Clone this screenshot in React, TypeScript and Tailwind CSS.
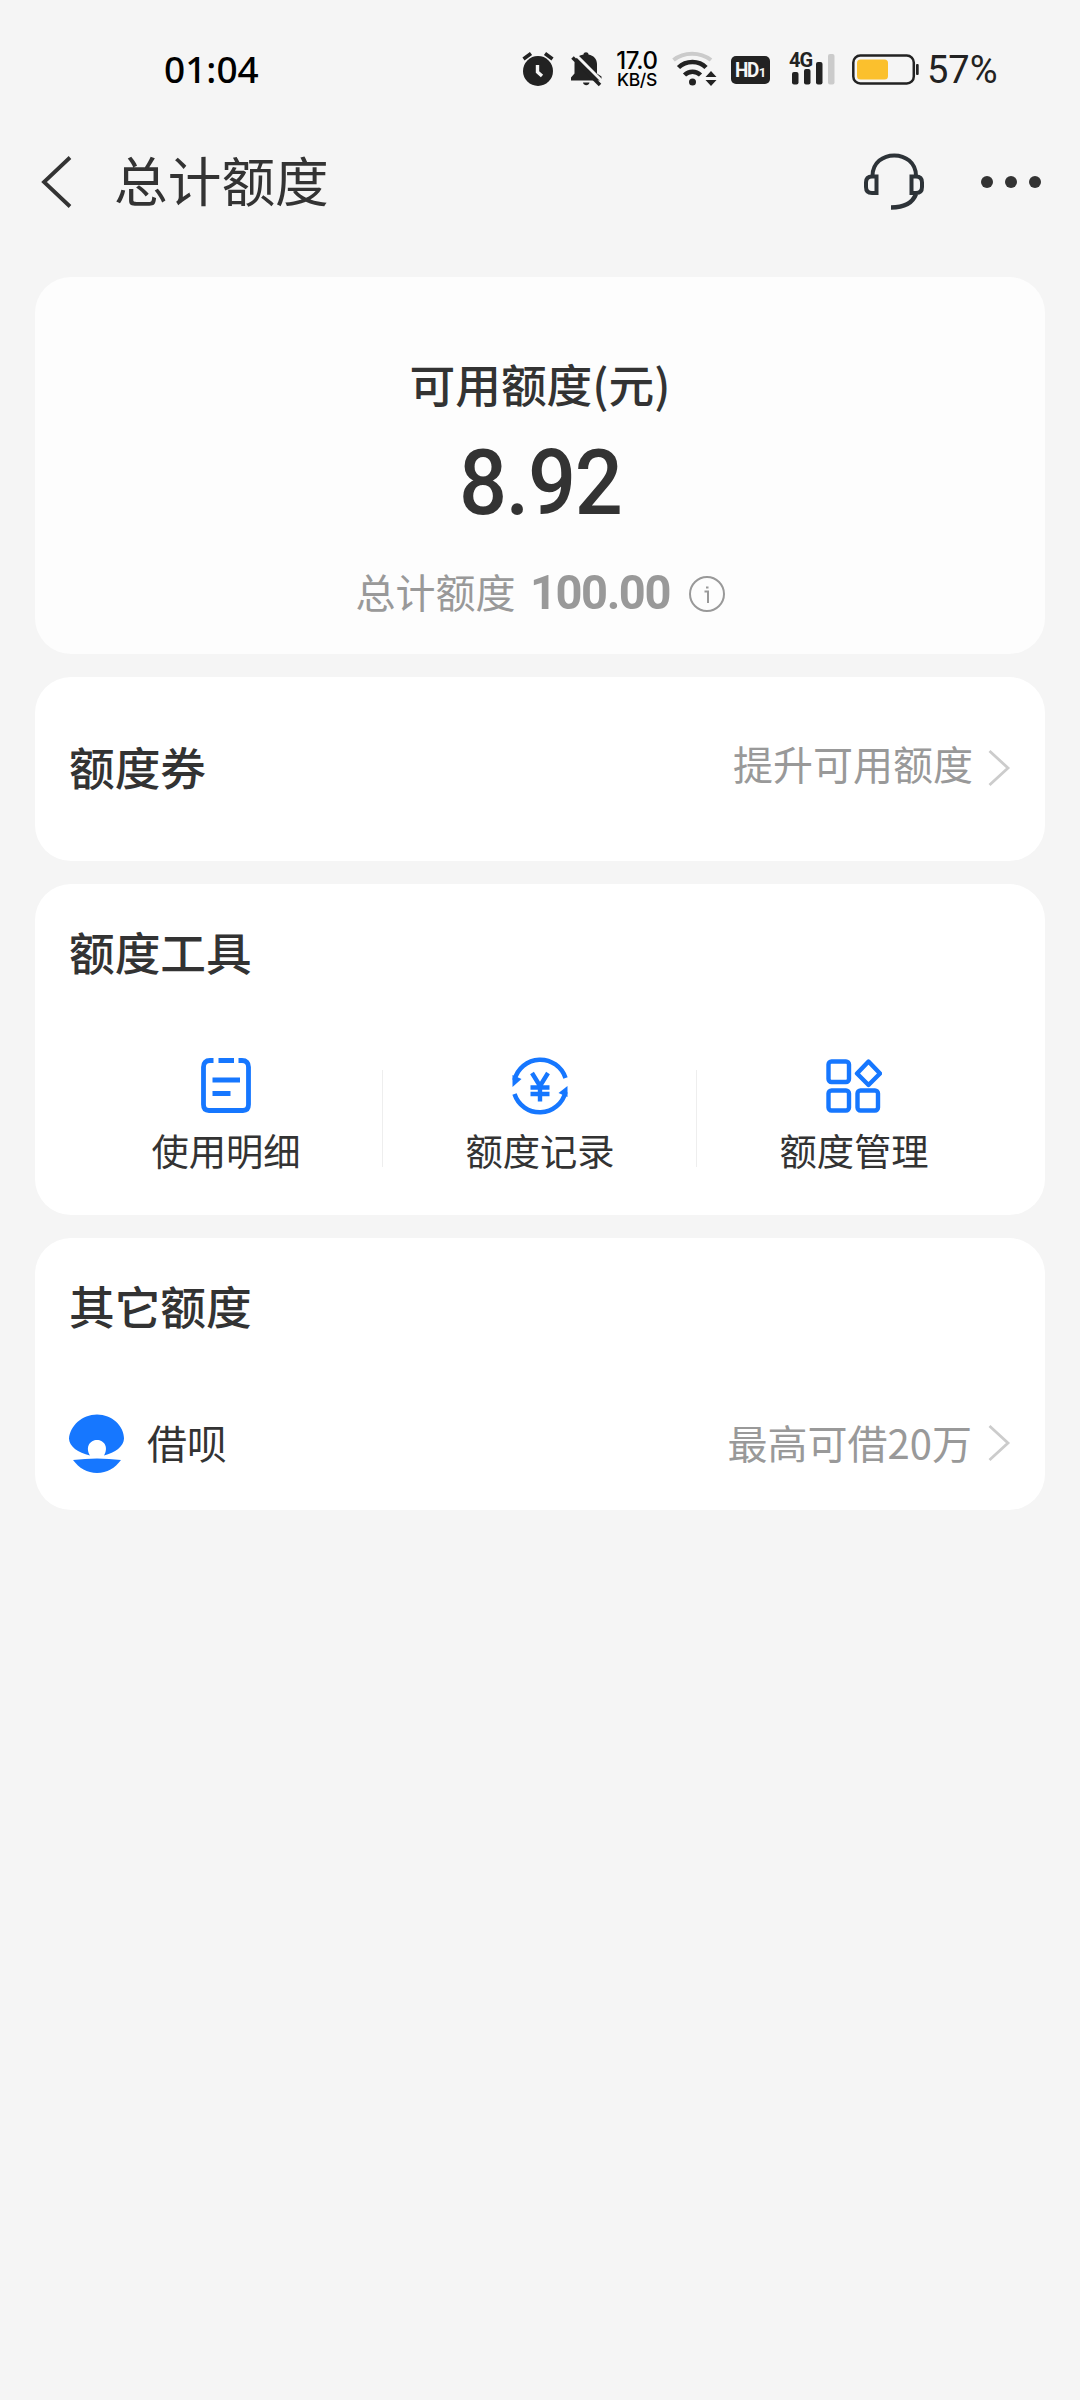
import React from "react";

const cjk = "font-['Noto_Sans_CJK_SC',sans-serif]";

function StatusBar() {
  return (
    <div className="flex items-center h-[138px] pl-[164px] text-[#222]">
      <span className="w-[358px] mt-[-1px] font-['Noto_Sans','Open_Sans',sans-serif] text-[37px] font-medium leading-none text-black">01:04</span>

      {/* Alarm */}
      <svg width="32" height="36" viewBox="0 0 32 36" fill="none">
        <circle cx="16" cy="20" r="15" fill="#222" />
        <path d="M1.5 8L9 2.5M30.5 8L23 2.5" stroke="#222" strokeWidth="3.6" />
        <path d="M15.5 14V21L20 25" stroke="#f5f5f5" strokeWidth="3.4" />
      </svg>

      {/* Muted bell */}
      <svg className="ml-[17px]" width="31" height="36" viewBox="0 0 31 36" fill="none">
        <path d="M0 29.5V26.5L3.5 22.5V13C3.5 7.5 7.5 4.2 12.5 3.4C12.5 0.6 17.5 0.6 17.5 3.4C22.5 4.2 26 8 26 13V22.5L30.5 25.5V29.5Z" fill="#222" />
        <path d="M12 31.5H18.5C18 35 12.5 35 12 31.5Z" fill="#222" />
        <path d="M4.5 3.5L33 32" stroke="#f5f5f5" strokeWidth="3" />
        <path d="M1.5 6.5L29 34" stroke="#222" strokeWidth="3.6" />
      </svg>

      <div className="ml-[13px] w-[44px] flex flex-col items-center font-['Inter',sans-serif] text-black">
        <span className="text-[24px] leading-[22px] font-medium tracking-[-0.3px]">17.0</span>
        <span className="text-[17.5px] leading-[16px] font-medium tracking-[-0.3px]">KB/S</span>
      </div>

      {/* Wifi */}
      <svg className="ml-[13px]" width="45" height="36" viewBox="0 0 45 36" fill="none">
        <path d="M1.5 9C12 0.5 28 0.5 39 9" stroke="#cbcbcb" strokeWidth="4" />
        <path d="M6.5 16.5C14 9 27 9 34 16.5" stroke="#222" strokeWidth="4.5" />
        <path d="M12.5 24C17 19.5 24 19.5 28.5 24" stroke="#222" strokeWidth="4.5" />
        <circle cx="20.5" cy="31" r="3.5" fill="#222" />
        <path d="M33.5 26L39 20L44.5 26ZM33.5 29L39 35L44.5 29Z" fill="#222" />
      </svg>

      <div className="ml-[14px] w-[39px] h-[28px] mt-[2px] rounded-[5px] bg-[#222] text-[#f5f5f5] flex items-baseline justify-center font-['Roboto',sans-serif] font-bold">
        <span className="w-[24px] text-[21px] leading-[28px] tracking-[-1.5px] origin-left scale-x-90">HD</span>
        <span className="text-[13px]">1</span>
      </div>

      {/* Signal */}
      <div className="relative ml-[19px] w-[46px] h-[36px]">
        <svg width="46" height="36" viewBox="0 0 46 36">
          <rect x="3" y="21" width="6.5" height="12.5" rx="2" fill="#222" />
          <rect x="15" y="18" width="6.5" height="15.5" rx="2" fill="#222" />
          <rect x="27" y="11" width="6.5" height="22.5" rx="2" fill="#222" />
          <rect x="39" y="3" width="6.5" height="30.5" rx="2" fill="#cbcbcb" />
        </svg>
        <span className="absolute left-0 top-0 font-['Roboto',sans-serif] font-bold text-[20px] leading-[18px] tracking-[-1px]">4G</span>
      </div>

      {/* Battery */}
      <svg className="ml-[17px]" width="67" height="36" viewBox="0 0 67 36" fill="none">
        <rect x="1.3" y="4.500" width="60.5" height="28" rx="7" stroke="#222" strokeWidth="2.5" />
        <rect x="5" y="8.5" width="31" height="20" rx="3.5" fill="#fbc02d" />
        <rect x="64" y="13" width="2.7" height="11" rx="1" fill="#222" />
      </svg>
      <span className="ml-[8px] mt-[2px] font-['Roboto',sans-serif] text-[38px] leading-none">57%</span>
    </div>
  );
}

function NavBar() {
  return (
    <div className="flex items-center h-[86px] pl-[41px] pr-[39px]">
      <svg className="mt-[2px]" width="32" height="52" viewBox="0 0 32 52" fill="none">
        <path d="M29 1.5L3 26L29 50.5" stroke="#333" strokeWidth="3.8" />
      </svg>
      <span className={`${cjk} ml-[41px] mt-[-5px] text-[53.7px] leading-[86px] text-[#333]`}>总计额度</span>
      <svg className="ml-auto mt-[2px]" width="60" height="58" viewBox="0 0 60 58" fill="none" stroke="#2d3338" strokeWidth="4">
        <path d="M8.5 23C8.5 -4.5 52 -4.5 52 23" />
        <path d="M12.5 23.5V40H8C4 40 2 38 2 34V29.5C2 25.5 4 23.5 8 23.5Z" />
        <path d="M47.5 23.5V40H52C56 40 58 38 58 34V29.5C58 25.5 56 23.5 52 23.5Z" />
        <path d="M52 41C49 49 41 54.5 27 54.5" strokeWidth="4.5" />
      </svg>
      <div className="ml-[57px] mt-[2px] flex gap-3">
        <i className="w-3 h-3 rounded-full bg-[#333]" />
        <i className="w-3 h-3 rounded-full bg-[#333]" />
        <i className="w-3 h-3 rounded-full bg-[#333]" />
      </div>
    </div>
  );
}

function Arrow() {
  return (
    <svg width="24" height="38" viewBox="0 0 24 38" fill="none">
      <path d="M2.5 2L21 19L2.5 36" stroke="#ccc" strokeWidth="2.8" />
    </svg>
  );
}

function DetailIcon() {
  return (
    <svg width="56" height="60" viewBox="0 0 56 60" fill="none" stroke="#1677ff" strokeWidth="4.8">
      <path d="M15.5 5.5H12Q5.5 5.5 5.5 12V49.5Q5.5 55.5 11 55.5H45Q50.5 55.5 50.5 49.5V12Q50.5 5.5 44 5.5H40.5" />
      <path d="M20.5 5.5H36M14.5 25H42M14.5 38.5H32.5" />
    </svg>
  );
}

function RecordIcon() {
  return (
    <svg width="56" height="60" viewBox="0 0 56 60" fill="none" stroke="#1677ff" strokeWidth="4.5">
      <path d="M2.5 25A26.5 26.5 0 0 1 53.5 23" />
      <path d="M53.5 37A26.5 26.5 0 0 1 2.5 39" />
      <path d="M0.5 20L9.5 24L0.5 32Z" fill="#1677ff" stroke="none" />
      <path d="M55.5 42L46.5 38L55.5 31Z" fill="#1677ff" stroke="none" />
      <path d="M20 18L28 31L36 18M28 31V46.5M18.5 32.5H37.5M18.5 39H37.5" strokeWidth="4.4" />
    </svg>
  );
}

function ManageIcon() {
  return (
    <svg width="56" height="60" viewBox="0 0 56 60" fill="none" stroke="#1677ff" strokeWidth="4.4">
      <rect x="2.5" y="6.5" width="20.5" height="20.5" rx="3" />
      <rect x="2.5" y="35.5" width="20.5" height="20" rx="3" />
      <rect x="31.5" y="35.5" width="20.5" height="20" rx="3" />
      <path d="M42.5 6.5L54 18.5L42.5 30L31 18.5Z" strokeLinejoin="round" />
    </svg>
  );
}

const tools = [
  { label: "使用明细", icon: <DetailIcon /> },
  { label: "额度记录", icon: <RecordIcon /> },
  { label: "额度管理", icon: <ManageIcon /> },
];

export default function App() {
  return (
    <div className={`${cjk} w-[1080px] h-[2400px] bg-[#f5f5f5] text-[#333]`}>
      <StatusBar />
      <NavBar />

      <div className="mt-[53px] px-[35px] flex flex-col">
        {/* Available credit */}
        <div className="h-[377px] rounded-[36px] bg-[#fdfdfd] flex flex-col items-center pt-[74px]">
          <div className="text-[45.7px] leading-[64px] font-medium">可用额度(元)</div>
          <div className="mt-[20px] font-['Roboto',sans-serif] font-medium text-[91px] leading-[96px] tracking-[-1.5px] scale-x-[0.93]">8.92</div>
          <div className="mt-[29px] flex items-center text-[#999]">
            <span className="text-[40px] leading-[64px] mt-[-3px]">总计额度</span>
            <span className="ml-[14px] mt-[1px] w-[141px] origin-left scale-x-[0.96] whitespace-nowrap font-['Roboto',sans-serif] font-bold text-[49px] leading-[64px] tracking-[-1.5px]">100.00</span>
            <svg className="ml-[18px] mt-[2px]" width="36" height="36" viewBox="0 0 36 36" fill="none" stroke="#999" strokeWidth="2">
              <circle cx="18" cy="18" r="17" />
              <path d="M15.5 15.5H19V27M17 11.5H19.5" />
            </svg>
          </div>
        </div>

        {/* Coupons */}
        <div className="mt-[23px] h-[184px] rounded-[36px] bg-white flex items-center justify-between px-[34px]">
          <span className="text-[45.7px] mt-[-6px] font-medium">额度券</span>
          <div className="flex items-center mt-[-3px]">
            <span className="text-[40px] mt-[-9px] text-[#999]">提升可用额度</span>
            <span className="ml-[14px]"><Arrow /></span>
          </div>
        </div>

        {/* Tools */}
        <div className="mt-[23px] h-[331px] rounded-[36px] bg-white px-[34px] pt-[35px]">
          <div className="text-[45.7px] leading-[64px] font-medium">额度工具</div>
          <div className="mt-[72px] flex">
            {tools.map((tool, i) => (
              <div key={tool.label} className="flex-1 flex">
                <div className="flex-1 flex flex-col items-center">
                  {tool.icon}
                  <span className="mt-[10px] text-[37.3px] leading-[50px]">{tool.label}</span>
                </div>
                {i < 2 && <div className="w-px h-[97px] mt-[15px] -ml-px bg-[#eee]" />}
              </div>
            ))}
          </div>
        </div>

        {/* Other credit */}
        <div className="mt-[23px] h-[272px] rounded-[36px] bg-white px-[34px] pt-[35px]">
          <div className="text-[45.7px] leading-[64px] font-medium">其它额度</div>
          <div className="mt-[74px] h-[64px] flex items-center">
            <svg className="mt-[2px]" width="56" height="60" viewBox="0 0 56 60" fill="#1677ff">
              <path d="M28 0.5C43 0.5 55 12 55 24.5C55 32 46 39 35 41.500C40 33 35 26 28 26C21 26 16 33 21 41.5C9 39 0 32 0 24.5C1 12 13 0.5 28 0.5Z" />
              <path d="M4 46Q28 43 52 46C46 54 38 59 28 59C18 59 10 54 4 46Z" />
            </svg>
            <span className="ml-[22px] mt-[-3px] text-[40px]">借呗</span>
            <span className="ml-auto mt-[-3px] text-[40px] text-[#999]">最高可借20万</span>
            <span className="ml-[15px]"><Arrow /></span>
          </div>
        </div>
      </div>
    </div>
  );
}
